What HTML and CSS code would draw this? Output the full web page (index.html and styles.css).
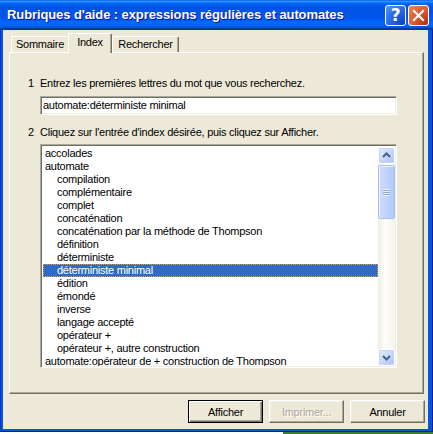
FILE: index.html
```html
<!DOCTYPE html>
<html lang="fr">
<head>
  <meta charset="UTF-8">
  <title>Rubriques d'aide</title>
  <link rel="stylesheet" href="styles.css">
</head>
<body>

<div class="window">
  <div class="titlebar">
    <span class="title">Rubriques d'aide : expressions régulières et automates</span>
    <div class="title-buttons">
      <span class="tbtn help">?</span>
      <span class="tbtn close">
        <svg width="21" height="21" viewBox="0 0 21 21"><path d="M6 6 L15 15 M15 6 L6 15" stroke="#fff" stroke-width="2.2" stroke-linecap="square"/></svg>
      </span>
    </div>
  </div>

  <div class="content">
    <div class="tabs">
      <div class="tab tab-sommaire">Sommaire</div>
      <div class="tab tab-index active">Index</div>
      <div class="tab tab-recherche">Rechercher</div>
    </div>

    <div class="panel">
      <p class="step"><span class="num">1</span>Entrez les premières lettres du mot que vous recherchez.</p>
      <div class="field">automate:déterministe minimal</div>

      <p class="step step-two"><span class="num">2</span>Cliquez sur l'entrée d'index désirée, puis cliquez sur Afficher.</p>
      <div class="listbox">
        <ul class="items">
          <li>accolades</li>
          <li>automate</li>
          <li class="sub">compilation</li>
          <li class="sub">complémentaire</li>
          <li class="sub">complet</li>
          <li class="sub">concaténation</li>
          <li class="sub">concaténation par la méthode de Thompson</li>
          <li class="sub">définition</li>
          <li class="sub">déterministe</li>
          <li class="sub selected">déterministe minimal</li>
          <li class="sub">édition</li>
          <li class="sub">émondé</li>
          <li class="sub">inverse</li>
          <li class="sub">langage accepté</li>
          <li class="sub">opérateur +</li>
          <li class="sub">opérateur +, autre construction</li>
          <li>automate:opérateur de + construction de Thompson</li>
        </ul>
        <div class="scrollbar">
          <div class="sb-btn">
            <svg width="15" height="15" viewBox="0 0 15 15"><path d="M4 9 L7.5 5.5 L11 9" fill="none" stroke="#4d6185" stroke-width="2"/></svg>
          </div>
          <div class="sb-thumb"><span class="grip"></span></div>
          <div class="sb-track"></div>
          <div class="sb-btn">
            <svg width="15" height="15" viewBox="0 0 15 15"><path d="M4 6 L7.5 9.5 L11 6" fill="none" stroke="#4d6185" stroke-width="2"/></svg>
          </div>
        </div>
      </div>
    </div>

    <div class="actions">
      <button class="btn default">Afficher</button>
      <button class="btn" disabled>Imprimer...</button>
      <button class="btn">Annuler</button>
    </div>
  </div>
</div>

<div class="desktop"><span class="desk-white"></span><span class="desk-green"></span></div>

</body>
</html>
```

FILE: styles.css
```css
body {
  margin: 0;
  background: #fff;
  font-family: "Liberation Sans", "DejaVu Sans", sans-serif;
  font-size: 11px;
  letter-spacing: -0.25px;
  color: #000;
}

.window {
  width: 433px;
  height: 432px;
  box-sizing: border-box;
  display: flex;
  flex-direction: column;
  background: #0855dd;
  box-shadow: inset 1px 0 #0831d9, inset -1px 0 #001ea0, inset 0 -1px #001ea0;
}

/* barre de titre */
.titlebar {
  height: 30px;
  flex: none;
  display: flex;
  align-items: center;
  padding: 0 4px 2px 7px;
  box-sizing: border-box;
  background: linear-gradient(to bottom, #0058ee 0%, #3593ff 4%, #288eff 6%, #127dff 8%, #036ffc 10%, #0262ee 14%, #0057e5 20%, #0054e3 24%, #0055eb 56%, #005bf5 66%, #026afe 76%, #0062ef 86%, #0052d6 92%, #0040ab 94%, #003092 100%);
}

.title {
  flex: 1;
  color: #fff;
  font-weight: bold;
  font-size: 13px;
  letter-spacing: -0.1px;
  text-shadow: 1px 1px #0f1089;
  white-space: nowrap;
}

.title-buttons {
  display: flex;
  gap: 2px;
  margin-top: 2px;
}

.tbtn {
  width: 21px;
  height: 21px;
  box-sizing: border-box;
  border: 1px solid #fff;
  border-radius: 3px;
  display: flex;
  align-items: center;
  justify-content: center;
}

.tbtn.help {
  background: radial-gradient(circle at 90% 90%, #0a44c8 0%, #2a6ae8 55%, #5a94f8 100%);
  color: #fff;
  font-weight: bold;
  font-size: 17px;
  font-family: "DejaVu Sans", sans-serif;
}

.tbtn.close {
  background: radial-gradient(circle at 90% 90%, #b8330e 0%, #e05a2e 55%, #f08a63 100%);
}

.tbtn.close svg {
  margin: -1px;
}

/* zone cliente */
.content {
  flex: 1;
  margin: 0 5px 3px 3px;
  background: #ece9d8;
  display: flex;
  flex-direction: column;
}

.tabs {
  height: 22px;
  display: flex;
  align-items: flex-end;
  padding-left: 8px;
}

.tab {
  height: 16px;
  box-sizing: border-box;
  border: 1px solid #fff;
  border-right-color: #716f64;
  border-bottom: none;
  border-radius: 2px 2px 0 0;
  box-shadow: inset -1px 0 #aca899;
  line-height: 15px;
  text-align: center;
}

.tab-sommaire {
  width: 57px;
  border-right: none;
  box-shadow: none;
}

.tab-index {
  width: 44px;
}

.tab-recherche {
  width: 67px;
}

.tab.active {
  height: 20px;
  margin-bottom: -1px;
  line-height: 16px;
  background: #ece9d8;
  position: relative;
  z-index: 1;
}

.panel {
  height: 342px;
  margin: 0 4px 0 6px;
  box-sizing: border-box;
  border: 1px solid;
  border-color: #fff #716f64 #716f64 #fff;
  box-shadow: inset -1px -1px #aca899;
  padding-top: 24px;
}

.step {
  margin: 0 0 0 18px;
  height: 13px;
  line-height: 13px;
  display: flex;
  white-space: nowrap;
}

.num {
  width: 12px;
  flex: none;
}

.step-two {
  margin-top: 11px;
}

.field,
.listbox {
  width: 357px;
  margin-left: 30px;
  box-sizing: border-box;
  background: #fff;
  border: 1px solid;
  border-color: #aca899 #fff #fff #aca899;
  box-shadow: inset 1px 1px #716f64, inset -1px -1px #f1efe2;
}

.field {
  height: 19px;
  margin-top: 6px;
  padding: 1px 0 0 2px;
  line-height: 15px;
}

.listbox {
  height: 224px;
  margin-top: 5px;
  padding: 2px 1px 1px 2px;
  display: flex;
  overflow: hidden;
}

.items {
  flex: 1;
  list-style: none;
  margin: 0;
  padding: 0;
  overflow: hidden;
}

.items li {
  height: 13px;
  line-height: 13px;
  padding-left: 2px;
  white-space: nowrap;
}

.items li.sub {
  padding-left: 14px;
}

.items li.selected {
  background: #316ac5;
  color: #fff;
  outline: 1px dotted #e0a040;
  outline-offset: -1px;
}

/* barre de défilement */
.scrollbar {
  width: 17px;
  flex: none;
  display: flex;
  flex-direction: column;
  background: linear-gradient(to right, #eeede5, #fdfdfa 40%, #f4f3ee);
}

.sb-btn {
  height: 17px;
  flex: none;
  box-sizing: border-box;
  border: 1px solid #fff;
  border-radius: 2px;
  background: linear-gradient(to bottom right, #e3ebfd, #c3d4fb 60%, #a9c0f4);
  box-shadow: 0 0 0 1px #c4d3f6 inset;
  display: flex;
  align-items: center;
  justify-content: center;
}

.sb-thumb {
  height: 54px;
  margin-top: 1px;
  flex: none;
  box-sizing: border-box;
  border: 1px solid #a6bef3;
  border-radius: 2px;
  background: linear-gradient(to right, #cddcfd, #c2d4fc 50%, #b2c8f8);
  box-shadow: inset 1px 1px #eef3ff;
  display: flex;
  align-items: center;
  justify-content: center;
}

.grip {
  width: 7px;
  height: 7px;
  background: repeating-linear-gradient(to bottom, #eef4ff 0 1px, #8ca6e0 1px 2px);
}

.sb-track {
  flex: 1;
}

/* boutons */
.actions {
  display: flex;
  justify-content: flex-end;
  gap: 6px;
  margin-top: 6px;
  padding-right: 3px;
}

.btn {
  width: 75px;
  height: 23px;
  box-sizing: border-box;
  padding: 0;
  font-family: inherit;
  font-size: 11px;
  letter-spacing: inherit;
  color: #000;
  background: #ece9d8;
  border: 1px solid;
  border-color: #fff #716f64 #716f64 #fff;
  box-shadow: inset -1px -1px #aca899, inset 1px 1px #f1efe2;
}

.btn.default {
  border-color: #000;
  box-shadow: inset 1px 1px #fff, inset -1px -1px #716f64, inset -2px -2px #aca899;
}

.btn:disabled {
  color: #aca899;
  text-shadow: 1px 1px #fff;
}

.desktop {
  display: flex;
  height: 2px;
}

.desk-white {
  width: 283px;
  background: #fff;
}

.desk-green {
  flex: 1;
  background: #3f7a2e;
}
```
